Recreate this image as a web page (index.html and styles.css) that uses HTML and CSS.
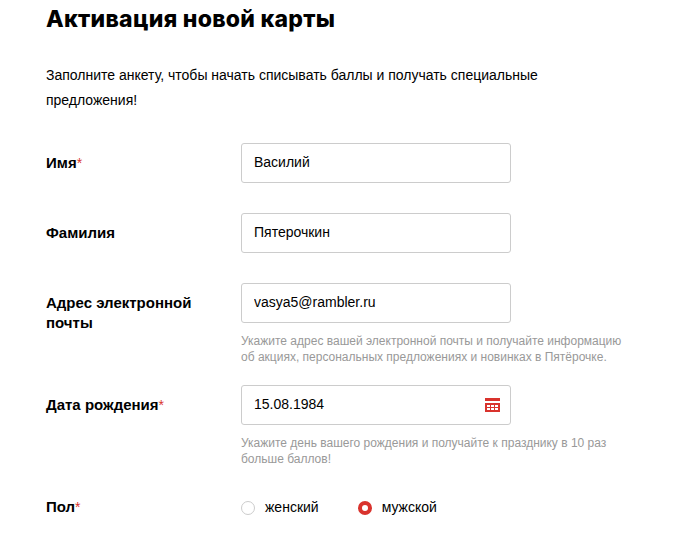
FILE: index.html
```html
<!DOCTYPE html>
<html lang="ru">
<head>
<meta charset="UTF-8">
<meta name="viewport" content="width=device-width, initial-scale=1.0">
<title>Активация новой карты</title>
<link rel="stylesheet" href="styles.css">
</head>
<body>
<div class="page">
    <h1 class="title">Активация новой карты</h1>
    <p class="intro">Заполните анкету, чтобы начать списывать баллы и получать специальные предложения!</p>

    <form class="form">
        <div class="row">
            <label class="label" for="name">Имя<span class="required">*</span></label>
            <div class="field">
                <input class="input" id="name" type="text" value="Василий">
            </div>
        </div>
        <div class="row">
            <label class="label" for="surname">Фамилия</label>
            <div class="field">
                <input class="input" id="surname" type="text" value="Пятерочкин">
            </div>
        </div>
        <div class="row">
            <label class="label" for="email">Адрес электронной почты</label>
            <div class="field">
                <input class="input" id="email" type="text" value="vasya5@rambler.ru">
                <p class="hint">Укажите адрес вашей электронной почты и получайте информацию<br>об акциях, персональных предложениях и новинках в Пятёрочке.</p>
            </div>
        </div>
        <div class="row">
            <label class="label" for="birthday">Дата рождения<span class="required">*</span></label>
            <div class="field">
                <div class="date">
                    <input class="date-input" id="birthday" type="text" value="15.08.1984">
                    <svg class="calendar" width="15" height="14" viewBox="0 0 15 14">
                        <path fill="#d9332d" fill-rule="evenodd" d="M0 0h15v3H0zM0 5h15v9H0zM2 7v2h3v-2zM6 7v2h3v-2zM10 7v2h3v-2zM2 10v2h3v-2zM6 10v2h3v-2zM10 10v2h3v-2z"/>
                    </svg>
                </div>
                <p class="hint">Укажите день вашего рождения и получайте к празднику в 10 раз<br>больше баллов!</p>
            </div>
        </div>
        <div class="row">
            <span class="label">Пол<span class="required">*</span></span>
            <div class="radios">
                <label class="option"><input class="radio" type="radio" name="sex">женский</label>
                <label class="option"><input class="radio" type="radio" name="sex" checked>мужской</label>
            </div>
        </div>
    </form>
</div>
</body>
</html>
```
FILE: styles.css
```css
* {
    box-sizing: border-box;
}

body {
    margin: 0;
    background: #fff;
    color: #000;
    font-family: "Liberation Sans", Arial, sans-serif;
    font-size: 14px;
}

.page {
    padding: 4px 46px 0;
}

.title {
    margin: 0;
    font-family: Inter, "Open Sans", sans-serif;
    font-size: 23px;
    font-weight: 800;
    letter-spacing: 0.27px;
    line-height: 30px;
    white-space: nowrap;
}

.intro {
    width: 530px;
    margin: 29px 0 30px;
    line-height: 25px;
}

.row {
    display: flex;
    margin-bottom: 30px;
}

.label {
    width: 195px;
    padding: 10px 30px 0 0;
    font-size: 15px;
    font-weight: bold;
    line-height: 20px;
}

.required {
    color: #d9332d;
    font-size: 14px;
    font-weight: normal;
}

.input,
.date {
    display: block;
    width: 270px;
    height: 40px;
    padding: 0 12px 2px;
    border: 1px solid #ccc;
    border-radius: 3px;
    background: #fff;
}

.input,
.date-input {
    color: #000;
    font-family: inherit;
    font-size: 14px;
}

.date {
    display: flex;
    align-items: center;
    padding: 0 10px 0 12px;
}

.date-input {
    flex: 1;
    min-width: 0;
    padding: 0 0 2px;
    border: 0;
    outline: none;
}

.hint {
    margin: 10px 0 -10px;
    color: #999;
    font-size: 12px;
    line-height: 16px;
    white-space: nowrap;
}

.radios {
    display: flex;
    gap: 39px;
    padding-top: 10px;
}

.option {
    display: flex;
    align-items: center;
    height: 20px;
}

.radio {
    appearance: none;
    width: 14px;
    height: 14px;
    margin: 2px 10px 0 0;
    border: 1px solid #ccc;
    border-radius: 50%;
}

.radio:checked {
    border: 4px solid #d9332d;
}
```
